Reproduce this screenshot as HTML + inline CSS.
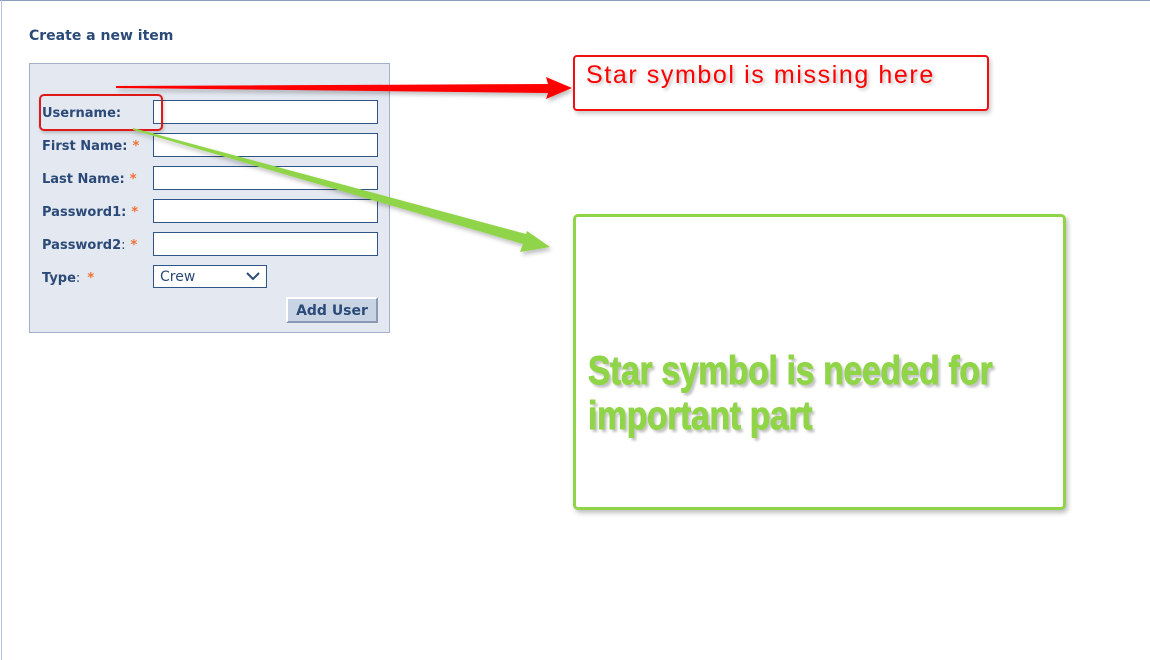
<!DOCTYPE html>
<html><head><meta charset="utf-8"><style>
html,body{margin:0;padding:0;}
body{width:1150px;height:660px;position:relative;overflow:hidden;background:#fff;font-family:"DejaVu Sans",Verdana,sans-serif;}
.topline{position:absolute;left:0;top:0;width:1150px;height:1px;background:#8a9cb8;}
.leftline{position:absolute;left:1px;top:0;width:1px;height:660px;background:#b8c4d8;}
.title{position:absolute;left:29px;top:28px;font-size:14px;font-weight:bold;color:#2b4a78;}
.box{position:absolute;left:29px;top:63px;width:359px;height:268px;background:#e4e8f0;border:1px solid #a4b0c8;}
.lbl{position:absolute;left:42px;font-size:13px;font-weight:bold;color:#2b4a78;}
.star{color:#f07030;margin-left:5px;}
.inp{position:absolute;left:153px;width:223px;height:22px;background:#fff;border:1px solid #2e5488;}
.sel{position:absolute;left:153px;top:265px;width:112px;height:21px;background:#fff;border:1px solid #2e5488;font-size:14px;color:#2b4a78;line-height:23px;text-indent:6px;}
.btn{position:absolute;left:286px;top:297px;width:88px;height:22px;background:#c8d4e4;border-top:2px solid #fff;border-left:2px solid #fff;border-right:2px solid #8a9ab4;border-bottom:2px solid #8a9ab4;font-size:14px;font-weight:bold;color:#2b4a78;text-align:center;line-height:24px;}
.redbox{position:absolute;left:573px;top:55px;width:412px;height:52px;border:2px solid #f01010;border-radius:4px;box-shadow:2px 3px 4px rgba(0,0,0,.2);}
.redtxt{position:absolute;left:586px;top:61px;font-family:"Liberation Sans",sans-serif;font-size:25px;letter-spacing:1.6px;color:#f00;text-shadow:2px 2px 3px rgba(0,0,0,.25);white-space:nowrap;}
.grnbox{position:absolute;left:573px;top:214px;width:487px;height:290px;border:3px solid #90d448;border-radius:5px;box-shadow:2px 3px 5px rgba(0,0,0,.25);}
.grntxt{position:absolute;left:588px;top:349px;font-family:"Liberation Sans Narrow","Liberation Sans",sans-serif;font-weight:bold;font-size:40px;line-height:45px;color:#90d448;text-shadow:3px 3px 3px rgba(0,0,0,.25);transform:scaleX(0.84);transform-origin:left top;white-space:nowrap;letter-spacing:-0.3px;-webkit-text-stroke:1px #90d448;}
.ubox{position:absolute;left:39px;top:94px;width:120px;height:33px;border:2px solid #e01818;border-radius:5px;box-shadow:1px 2px 3px rgba(0,0,0,.2);}
</style></head><body>
<div class="topline"></div><div class="leftline"></div>
<div class="title">Create a new item</div>
<div class="box"></div>
<div class="lbl" style="top:106px">Username:</div>
<div class="lbl" style="top:139px">First Name:<span class="star">*</span></div>
<div class="lbl" style="top:172px">Last Name:<span class="star">*</span></div>
<div class="lbl" style="top:205px">Password1:<span class="star">*</span></div>
<div class="lbl" style="top:238px">Password2<span style="font-weight:normal">:</span><span class="star">*</span></div>
<div class="lbl" style="top:271px">Type<span style="font-weight:normal">:</span><span class="star" style="margin-left:7px">*</span></div>
<div class="inp" style="top:100px"></div>
<div class="inp" style="top:133px"></div>
<div class="inp" style="top:166px"></div>
<div class="inp" style="top:199px"></div>
<div class="inp" style="top:232px"></div>
<div class="sel">Crew<svg style="position:absolute;left:92px;top:6px" width="14" height="9" viewBox="0 0 14 9"><path d="M1 1 L7 7 L13 1" fill="none" stroke="#2b4a78" stroke-width="2"/></svg></div>
<div class="btn">Add User</div>
<div class="ubox"></div>
<svg style="position:absolute;left:0;top:0" width="1150" height="660">
<defs><filter id="sh" x="-10%" y="-50%" width="120%" height="200%"><feDropShadow dx="2" dy="3" stdDeviation="2" flood-opacity="0.25"/></filter></defs>
<polygon filter="url(#sh)" points="116,86 548,84 546,77 572,88 546,99 548,93 116,88" fill="#ff0000"/>
<polygon filter="url(#sh)" points="133,128 526,234 527,231 550,247 520,252 523,244 133,130" fill="#90d448"/>
</svg>
<div class="redbox"></div>
<div class="redtxt">Star symbol is missing here</div>
<div class="grnbox"></div>
<div class="grntxt">Star symbol is needed for<br>important part</div>
</body></html>
